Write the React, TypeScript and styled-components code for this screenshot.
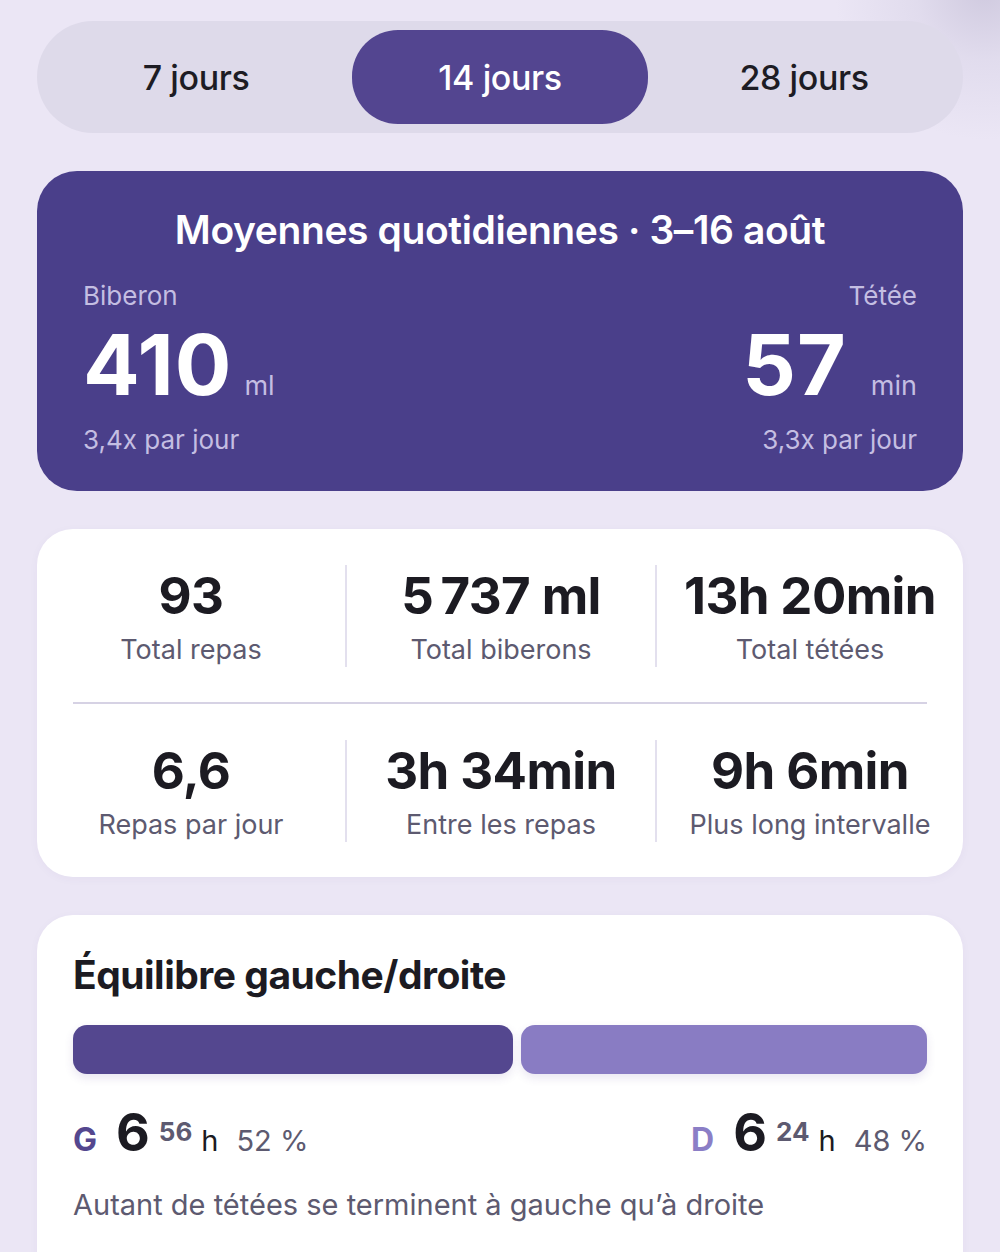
import React from "react";
import styled, { createGlobalStyle } from "styled-components";

const Global = createGlobalStyle`
  html, body {
    margin: 0;
    padding: 0;
  }
  body {
    background:
      radial-gradient(circle at 985px -10px, rgba(196, 190, 214, 0.7) 0, rgba(210, 205, 226, 0.4) 70px, rgba(235, 230, 245, 0) 150px),
      #ebe6f5;
    font-family: Inter, "Noto Sans", "Liberation Sans", sans-serif;
    color: #1c1b22;
    -webkit-font-smoothing: antialiased;
  }
`;

const Page = styled.div`
  box-sizing: border-box;
  width: 1000px;
  height: 1252px;
  overflow: hidden;
  padding: 21px 37px 0;
  display: flex;
  flex-direction: column;
  gap: 38px;
  & > * {
    flex-shrink: 0;
  }
`;

const Segmented = styled.div`
  box-sizing: border-box;
  height: 112px;
  border-radius: 56px;
  background: #dedaea;
  padding: 9px;
  display: grid;
  grid-template-columns: 1fr 296px 1fr;
  gap: 6px;
`;

const Segment = styled.div<{ $active?: boolean }>`
  display: flex;
  align-items: center;
  justify-content: center;
  border-radius: 46px;
  font-size: 34px;
  font-weight: 500;
  letter-spacing: -0.4px;
  color: ${(p) => (p.$active ? "#ffffff" : "#1d1c24")};
  background: ${(p) => (p.$active ? "#534590" : "transparent")};
`;

const HeroCard = styled.section`
  box-sizing: border-box;
  height: 320px;
  border-radius: 40px;
  background: #4a3f8a;
  padding: 30px 46px 0;
  color: #fff;
  display: flex;
  flex-direction: column;
`;

const HeroTitle = styled.h2`
  margin: 0;
  text-align: center;
  font-size: 39px;
  line-height: 58px;
  font-weight: 600;
  letter-spacing: -0.4px;
`;

const HeroRow = styled.div`
  display: flex;
  justify-content: space-between;
  margin-top: 21px;
`;

const HeroCol = styled.div<{ $right?: boolean }>`
  display: flex;
  flex-direction: column;
  align-items: ${(p) => (p.$right ? "flex-end" : "flex-start")};
`;

const HeroLabel = styled.div`
  font-size: 26px;
  line-height: 32px;
  color: #c4bee2;
  font-weight: 400;
`;

const HeroValue = styled.div`
  display: flex;
  align-items: baseline;
  gap: 12px;
  margin-top: 8px;
  height: 90px;
`;

const BigNum = styled.span`
  font-size: 84px;
  line-height: 90px;
  font-weight: 700;
  letter-spacing: 1px;
`;

const Unit = styled.span<{ $wide?: boolean }>`
  font-size: 27px;
  color: #c4bee2;
  margin-left: ${(p) => (p.$wide ? "12px" : "0")};
`;

const HeroSub = styled.div`
  font-size: 26px;
  line-height: 32px;
  color: #c4bee2;
  margin-top: 14px;
`;

const WhiteCard = styled.section`
  box-sizing: border-box;
  border-radius: 36px;
  background: #ffffff;
  box-shadow: 0 2px 10px rgba(80, 60, 140, 0.04);
`;

const StatsCard = styled(WhiteCard)`
  height: 348px;
  padding: 36px 0 0;
`;

const StatsRow = styled.div`
  display: grid;
  grid-template-columns: 308px 1fr 308px;
  height: 101px;
`;

const StatCell = styled.div<{ $divider?: boolean }>`
  display: flex;
  flex-direction: column;
  align-items: center;
  border-left: ${(p) => (p.$divider ? "2px solid #e3e0ee" : "none")};
`;

const StatValue = styled.div`
  font-size: 51px;
  line-height: 58px;
  font-weight: 700;
  letter-spacing: -0.6px;
  color: #1c1b22;
  margin-top: 2px;
  white-space: nowrap;
`;

const StatLabel = styled.div`
  font-size: 27px;
  line-height: 34px;
  color: #5d5a70;
  margin-top: 8px;
  white-space: nowrap;
`;

const HDivider = styled.div`
  height: 2px;
  background: #d6d2e4;
  margin: 36px 36px 36px;
`;

const BalanceCard = styled(WhiteCard)`
  padding: 36px 36px 40px;
  min-height: 380px;
`;

const BalanceTitle = styled.h3`
  margin: 0;
  font-size: 39px;
  line-height: 48px;
  font-weight: 700;
  letter-spacing: -0.5px;
  color: #1c1b22;
`;

const BarTrack = styled.div`
  display: flex;
  gap: 8px;
  height: 49px;
  margin-top: 26px;
`;

const Bar = styled.div<{ $tone: "dark" | "light" }>`
  height: 100%;
  border-radius: 14px;
  background: ${(p) => (p.$tone === "dark" ? "#54478f" : "#897cc3")};
  box-shadow: 0 4px 10px rgba(70, 50, 140, 0.12);
`;

const SideRow = styled.div`
  display: flex;
  justify-content: space-between;
  align-items: baseline;
  margin-top: 27px;
  height: 64px;
`;

const Side = styled.div`
  display: flex;
  align-items: baseline;
`;

const SideLetter = styled.span<{ $tone: "dark" | "light" }>`
  font-size: 32px;
  font-weight: 700;
  color: ${(p) => (p.$tone === "dark" ? "#54478f" : "#8b7ec6")};
  margin-right: 19px;
`;

const Hours = styled.span`
  font-size: 52px;
  font-weight: 700;
  color: #1c1b22;
  line-height: 64px;
`;

const Minutes = styled.span`
  font-size: 26px;
  font-weight: 700;
  color: #5d5a70;
  position: relative;
  top: -10px;
  margin-left: 9px;
`;

const HourUnit = styled.span`
  font-size: 29px;
  color: #1c1b22;
  margin-left: 9px;
`;

const Percent = styled.span`
  font-size: 29px;
  color: #5d5a70;
  margin-left: 18px;
`;

const Note = styled.p`
  margin: 22px 0 0;
  font-size: 29px;
  line-height: 36px;
  color: #5d5a70;
`;

const stats = [
  [
    { v: "93", l: "Total repas" },
    { v: "5\u2009737 ml", l: "Total biberons" },
    { v: "13h 20min", l: "Total tétées" },
  ],
  [
    { v: "6,6", l: "Repas par jour" },
    { v: "3h 34min", l: "Entre les repas" },
    { v: "9h 6min", l: "Plus long intervalle" },
  ],
];

export default function App() {
  const left = 52;
  return (
    <>
      <Global />
      <Page>
        <Segmented>
          <Segment>7 jours</Segment>
          <Segment $active>14 jours</Segment>
          <Segment>28 jours</Segment>
        </Segmented>

        <HeroCard>
          <HeroTitle>Moyennes quotidiennes · 3–16 août</HeroTitle>
          <HeroRow>
            <HeroCol>
              <HeroLabel>Biberon</HeroLabel>
              <HeroValue>
                <BigNum>410</BigNum>
                <Unit>ml</Unit>
              </HeroValue>
              <HeroSub>3,4x par jour</HeroSub>
            </HeroCol>
            <HeroCol $right>
              <HeroLabel>Tétée</HeroLabel>
              <HeroValue>
                <BigNum>57</BigNum>
                <Unit $wide>min</Unit>
              </HeroValue>
              <HeroSub>3,3x par jour</HeroSub>
            </HeroCol>
          </HeroRow>
        </HeroCard>

        <StatsCard>
          {stats.map((row, ri) => (
            <React.Fragment key={ri}>
              {ri > 0 && <HDivider />}
              <StatsRow>
                {row.map((s, i) => (
                  <StatCell key={s.l} $divider={i > 0}>
                    <StatValue>{s.v}</StatValue>
                    <StatLabel>{s.l}</StatLabel>
                  </StatCell>
                ))}
              </StatsRow>
            </React.Fragment>
          ))}
        </StatsCard>

        <BalanceCard>
          <BalanceTitle>Équilibre gauche/droite</BalanceTitle>
          <BarTrack>
            <Bar $tone="dark" style={{ flex: left }} />
            <Bar $tone="light" style={{ flex: 100 - left }} />
          </BarTrack>
          <SideRow>
            <Side>
              <SideLetter $tone="dark">G</SideLetter>
              <Hours>6</Hours>
              <Minutes>56</Minutes>
              <HourUnit>h</HourUnit>
              <Percent>52 %</Percent>
            </Side>
            <Side>
              <SideLetter $tone="light">D</SideLetter>
              <Hours>6</Hours>
              <Minutes>24</Minutes>
              <HourUnit>h</HourUnit>
              <Percent>48 %</Percent>
            </Side>
          </SideRow>
          <Note>Autant de tétées se terminent à gauche qu’à droite</Note>
        </BalanceCard>
      </Page>
    </>
  );
}
